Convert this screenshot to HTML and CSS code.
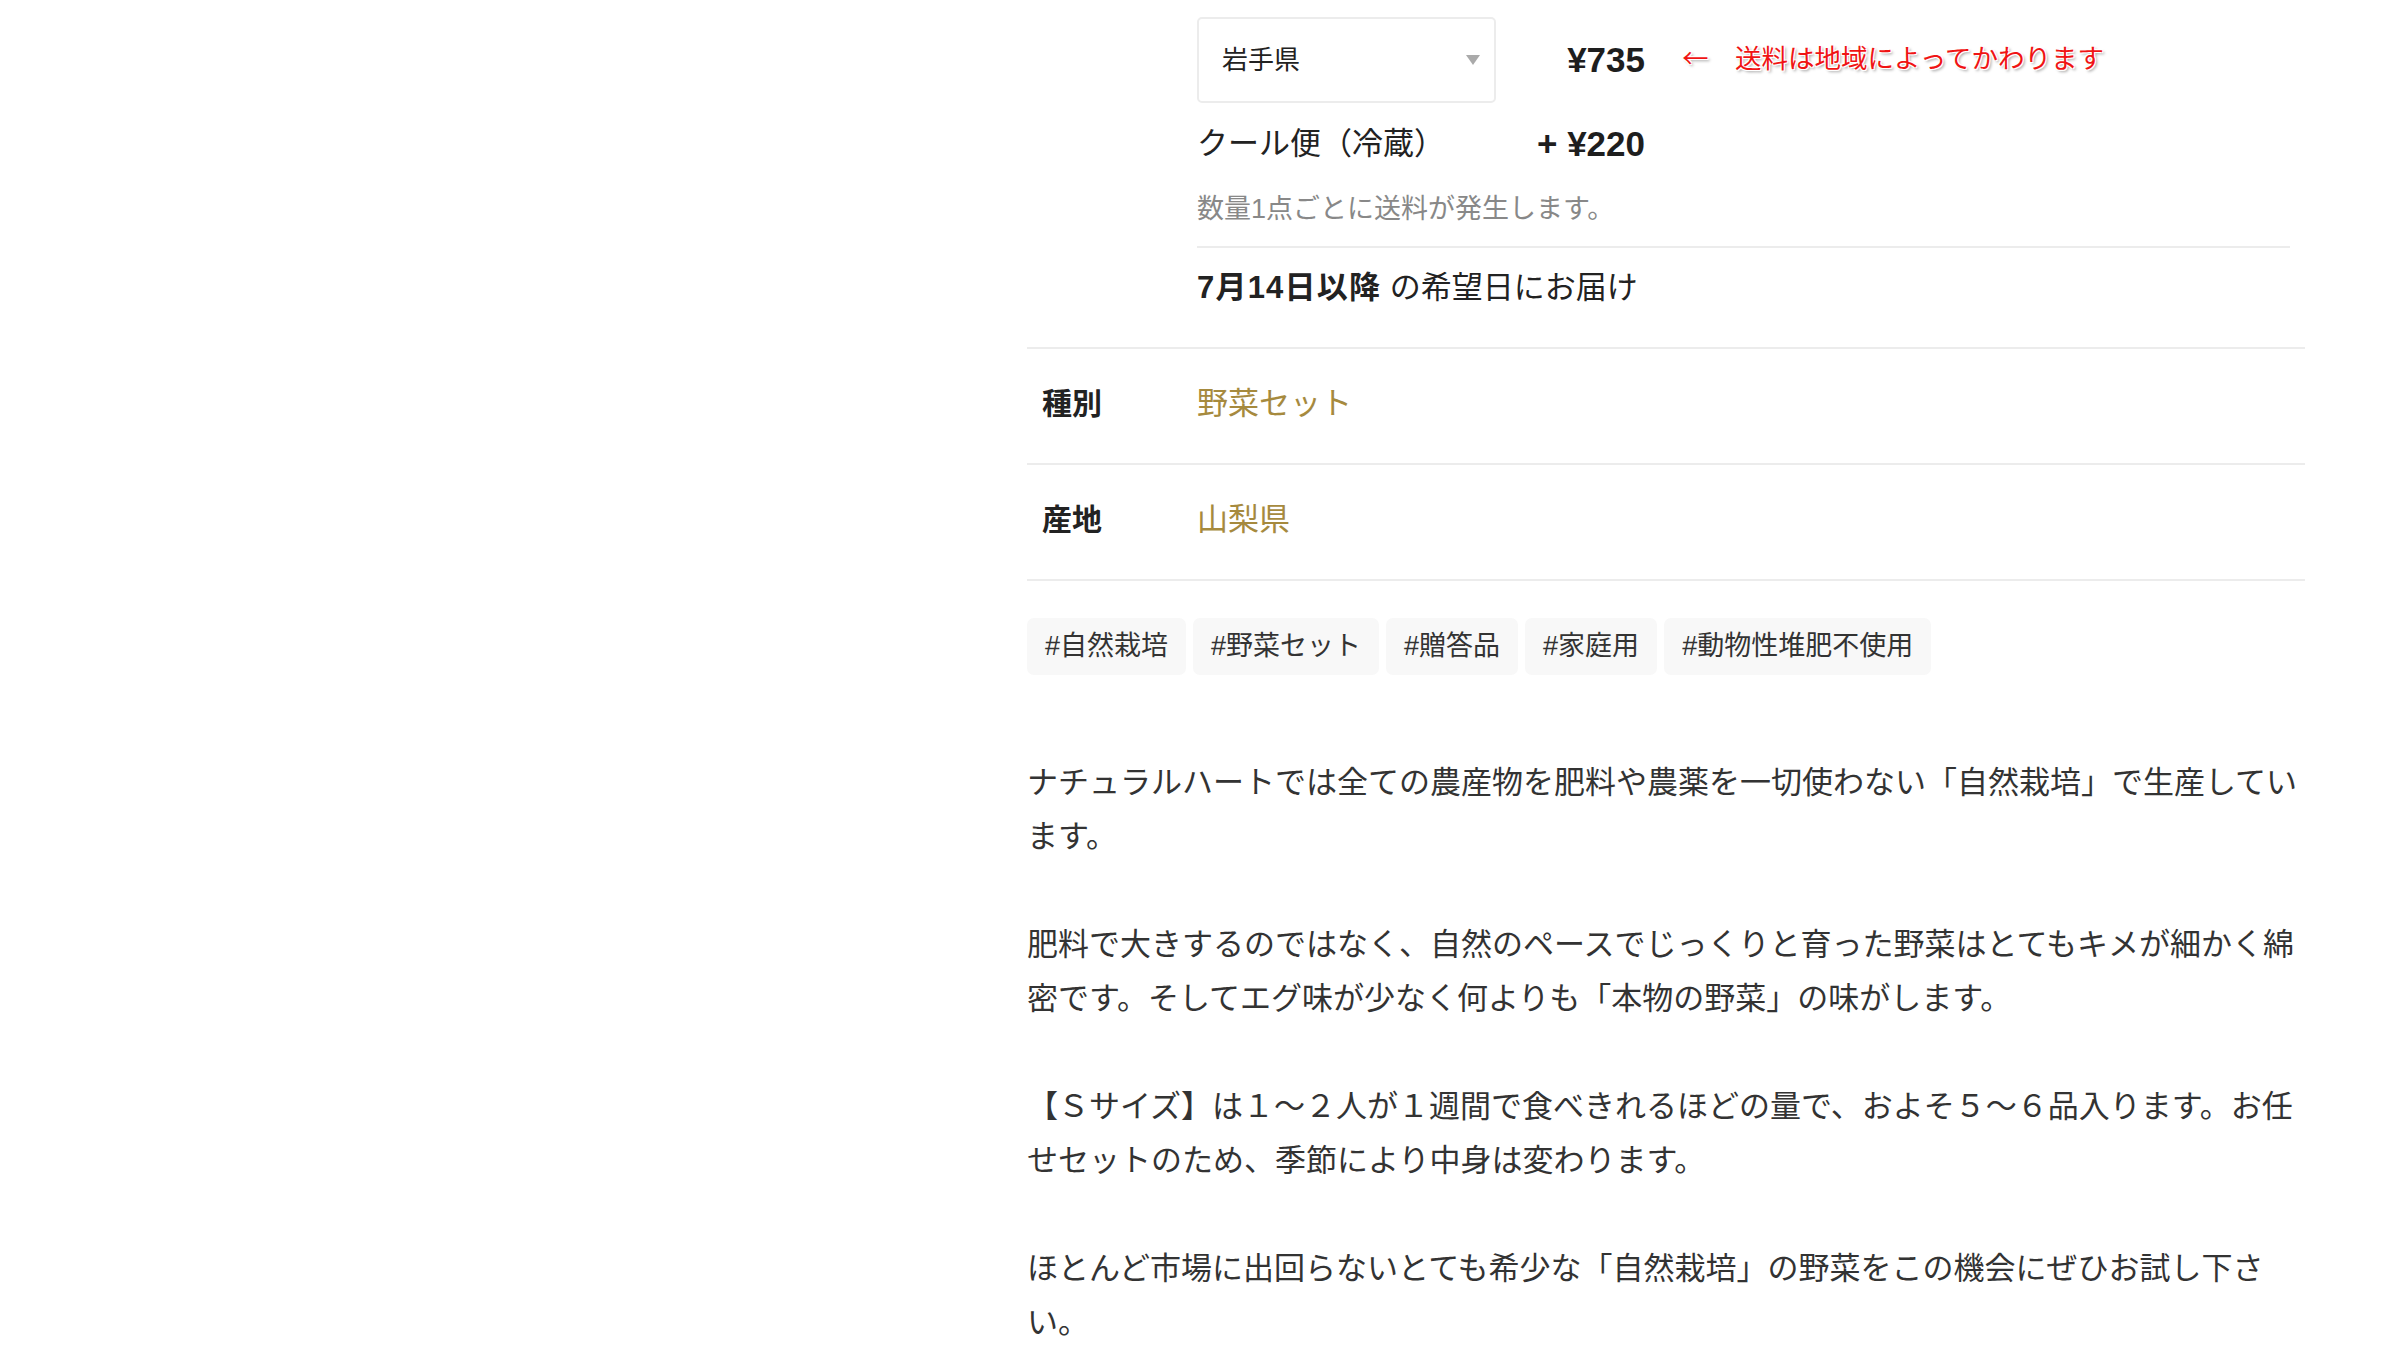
FILE: index.html
```html
<!DOCTYPE html>
<html lang="ja">
<head>
<meta charset="utf-8">
<title>野菜セット</title>
<link rel="stylesheet" href="styles.css">
</head>
<body>
<div class="page">
  <div class="gallery"></div>
  <main class="detail">
    <div class="spec-row spec-row--shipping">
      <div class="spec-label"></div>
      <div class="spec-value shipping">
        <div class="ship-main">
          <div class="select">
            <span class="select-text">岩手県</span>
            <span class="select-caret"></span>
          </div>
          <div class="price">¥735</div>
          <div class="ship-note">←　送料は地域によってかわります</div>
        </div>
        <div class="ship-cool">
          <span class="cool-label">クール便（冷蔵）</span>
          <span class="price">+ ¥220</span>
        </div>
        <div class="ship-caption">数量1点ごとに送料が発生します。</div>
        <div class="ship-delivery"><strong>7月14日以降</strong> の希望日にお届け</div>
      </div>
    </div>
    <div class="spec-row">
      <div class="spec-label">種別</div>
      <div class="spec-value link">野菜セット</div>
    </div>
    <div class="spec-row spec-row--last">
      <div class="spec-label">産地</div>
      <div class="spec-value link">山梨県</div>
    </div>
    <ul class="tags">
      <li class="tag">#自然栽培</li>
      <li class="tag">#野菜セット</li>
      <li class="tag">#贈答品</li>
      <li class="tag">#家庭用</li>
      <li class="tag">#動物性堆肥不使用</li>
    </ul>
    <div class="description">
      <p>ナチュラルハートでは全ての農産物を肥料や農薬を一切使わない「自然栽培」で生産しています。</p>
      <p>肥料で大きするのではなく、自然のペースでじっくりと育った野菜はとてもキメが細かく綿密です。そしてエグ味が少なく何よりも「本物の野菜」の味がします。</p>
      <p>【Ｓサイズ】は１～２人が１週間で食べきれるほどの量で、およそ５～６品入ります。お任せセットのため、季節により中身は変わります。</p>
      <p>ほとんど市場に出回らないとても希少な「自然栽培」の野菜をこの機会にぜひお試し下さい。</p>
    </div>
  </main>
</div>
</body>
</html>
```

FILE: styles.css
```css
html, body {
  margin: 0;
  padding: 0;
  background: #fff;
}

body {
  font-family: "Liberation Sans", "Noto Sans CJK JP", sans-serif;
  color: #333;
  font-size: 31px;
}

.page {
  display: grid;
  grid-template-columns: 1027px 1278px;
}

.detail {
  padding-top: 17px;
}

/* spec table */
.spec-row {
  display: grid;
  grid-template-columns: 170px 1fr;
  border-top: 2px solid #ececec;
  padding: 28px 0 32px;
  line-height: 54px;
}

.spec-row--shipping {
  border-top: 0;
  padding: 0;
}

.spec-row--last {
  border-bottom: 2px solid #ececec;
}

.spec-label {
  padding-left: 15px;
  font-weight: bold;
  color: #222;
  font-size: 30px;
}

.spec-value.link {
  color: #a68a3e;
}

/* shipping */
.shipping {
  padding-right: 15px;
}

.ship-main {
  display: flex;
  align-items: center;
}

.select {
  box-sizing: border-box;
  width: 299px;
  height: 86px;
  border: 2px solid #ececec;
  border-radius: 5px;
  display: flex;
  align-items: center;
  justify-content: space-between;
  padding: 0 14px 0 23px;
}

.select-text {
  font-size: 26px;
  color: #222;
}

.select-caret {
  width: 0;
  height: 0;
  border-left: 7px solid transparent;
  border-right: 7px solid transparent;
  border-top: 10px solid #aaa;
}

.price {
  font-weight: bold;
  font-size: 35px;
  color: #1e1e1e;
  text-align: right;
  width: 149px;
}

.ship-note {
  font-family: "Noto Sans CJK JP", sans-serif;
  font-size: 26.5px;
  color: #f01414;
  margin-left: 37px;
  margin-top: -6px;
  text-shadow:
    1px 1px 0 #fff,
    -1px -1px 0 #fff,
    1px -1px 0 #fff,
    -1px 1px 0 #fff,
    2px 2px 3px rgba(0, 0, 0, 0.4);
}

.ship-cool {
  display: grid;
  grid-template-columns: 299px 149px;
  margin-top: 14px;
  line-height: 54px;
  color: #222;
}

.ship-cool .price {
  width: auto;
}

.ship-caption {
  margin-top: 18px;
  font-size: 27px;
  line-height: 40px;
  color: #888;
  padding-bottom: 17px;
  border-bottom: 2px solid #ececec;
}

.ship-delivery {
  padding: 13px 0 32px;
  line-height: 54px;
  color: #222;
}

.ship-delivery strong {
  font-weight: bold;
  letter-spacing: 1.2px;
}

/* tags */
.tags {
  list-style: none;
  margin: 37px 0 0;
  padding: 0;
  display: flex;
  flex-wrap: wrap;
  gap: 7px;
}

.tag {
  font-size: 27px;
  line-height: 57px;
  height: 57px;
  padding: 0 18px;
  background: #f8f8f8;
  border-radius: 7px;
  color: #333;
}

/* description */
.description {
  margin-top: 81px;
}

.description p {
  margin: 0 0 54px;
  font-size: 31px;
  line-height: 54px;
  color: #333;
}
```
